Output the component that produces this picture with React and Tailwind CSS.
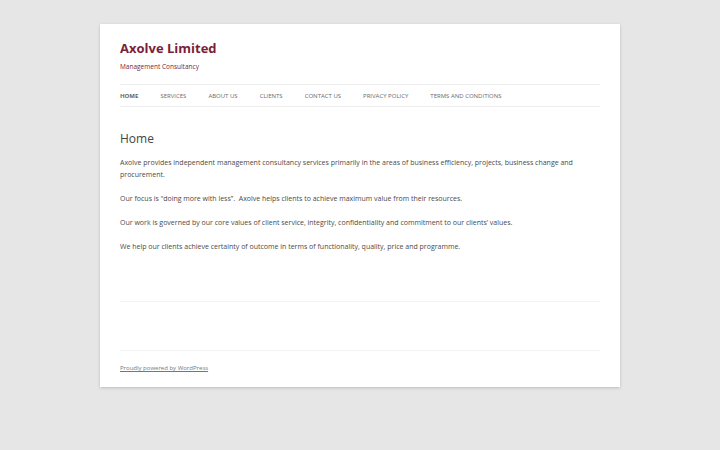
import React from 'react';

const nav = ['Home', 'Services', 'About Us', 'Clients', 'Contact Us', 'Privacy Policy', 'Terms and Conditions'];

export default function App() {
    return (
        <div className="min-h-[450px] bg-[#e6e6e6] pt-6 pb-[63px] font-['Open_Sans',sans-serif] text-[#444]">
            <div className="mx-auto w-[520px] bg-white px-5 shadow-[0_1px_3px_rgba(100,100,100,0.3)]">
                <header className="pt-[15px]">
                    <h1 className="text-[13px] font-bold leading-[18px] text-[#7b1e38]">Axolve Limited</h1>
                    <h2 className="mt-[4px] text-[6.5px] leading-[12px] text-[#7b1e38]">Management Consultancy</h2>
                    <nav className="mt-[11px] flex h-[23px] items-center gap-[22px] border-y border-[#ededed] text-[6px] leading-[12px] uppercase text-[#6a6a6a]">
                        {nav.map((item, i) => (
                            <span key={item} className={i === 0 ? 'font-bold text-[#636363]' : ''}>{item}</span>
                        ))}
                    </nav>
                </header>
                <main className="pt-[23px]">
                    <h1 className="text-[12px] leading-[18px] text-[#444]">Home</h1>
                    <div className="mt-[9px] space-y-[12px] text-[7px] leading-[12px] text-[#4a4a4a]">
                        <p>Axolve provides independent management consultancy services primarily in the areas of business efficiency, projects, business change and procurement.</p>
                        <p>Our focus is “doing more with less”.&nbsp; Axolve helps clients to achieve maximum value from their resources.</p>
                        <p>Our work is governed by our core values of client service, integrity, confidentiality and commitment to our clients’ values.</p>
                        <p>We help our clients achieve certainty of outcome in terms of functionality, quality, price and programme.</p>
                    </div>
                    <div className="mt-[48px] border-t border-[#f3f3f3]"></div>
                </main>
                <div className="h-[48px]"></div>
                <footer className="border-t border-[#f3f3f3] pt-[11px] pb-[13px] text-[6px] leading-[12px]">
                    <a className="text-[#777] underline">Proudly powered by WordPress</a>
                </footer>
            </div>
        </div>
    );
}
